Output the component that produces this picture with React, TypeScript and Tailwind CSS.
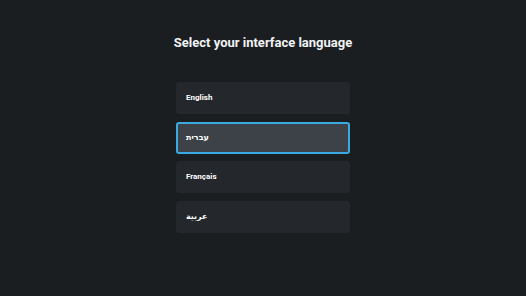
import React from 'react'

const languages = [
  { code: 'en', label: 'English' },
  { code: 'he', label: 'עברית' },
  { code: 'fr', label: 'Français' },
  { code: 'ar', label: 'عربية' },
]

export default function App() {
  const selected = 'he'

  return (
    <div
      className="w-[526px] h-[296px] bg-[#1b1e21] flex flex-col items-center"
      style={{ fontFamily: 'Roboto, "Noto Sans", "DejaVu Sans", sans-serif' }}
    >
      <h1 className="mt-[34px] text-[13px] leading-[18px] font-bold text-[#f1f3f4]">
        Select your interface language
      </h1>
      <div className="mt-[30px] w-[174px] flex flex-col gap-[7.5px]">
        {languages.map((lang) => {
          const active = lang.code === selected
          return (
            <div
              key={lang.code}
              className={
                active
                  ? 'h-[32px] rounded-[3px] bg-[#3c4248] border-2 border-[#3ba9e2] flex items-center px-[8px]'
                  : 'h-[32px] rounded-[3px] bg-[#24282c] flex items-center px-[10px]'
              }
            >
              <span className="text-[8px] font-bold text-white">{lang.label}</span>
            </div>
          )
        })}
      </div>
    </div>
  )
}
